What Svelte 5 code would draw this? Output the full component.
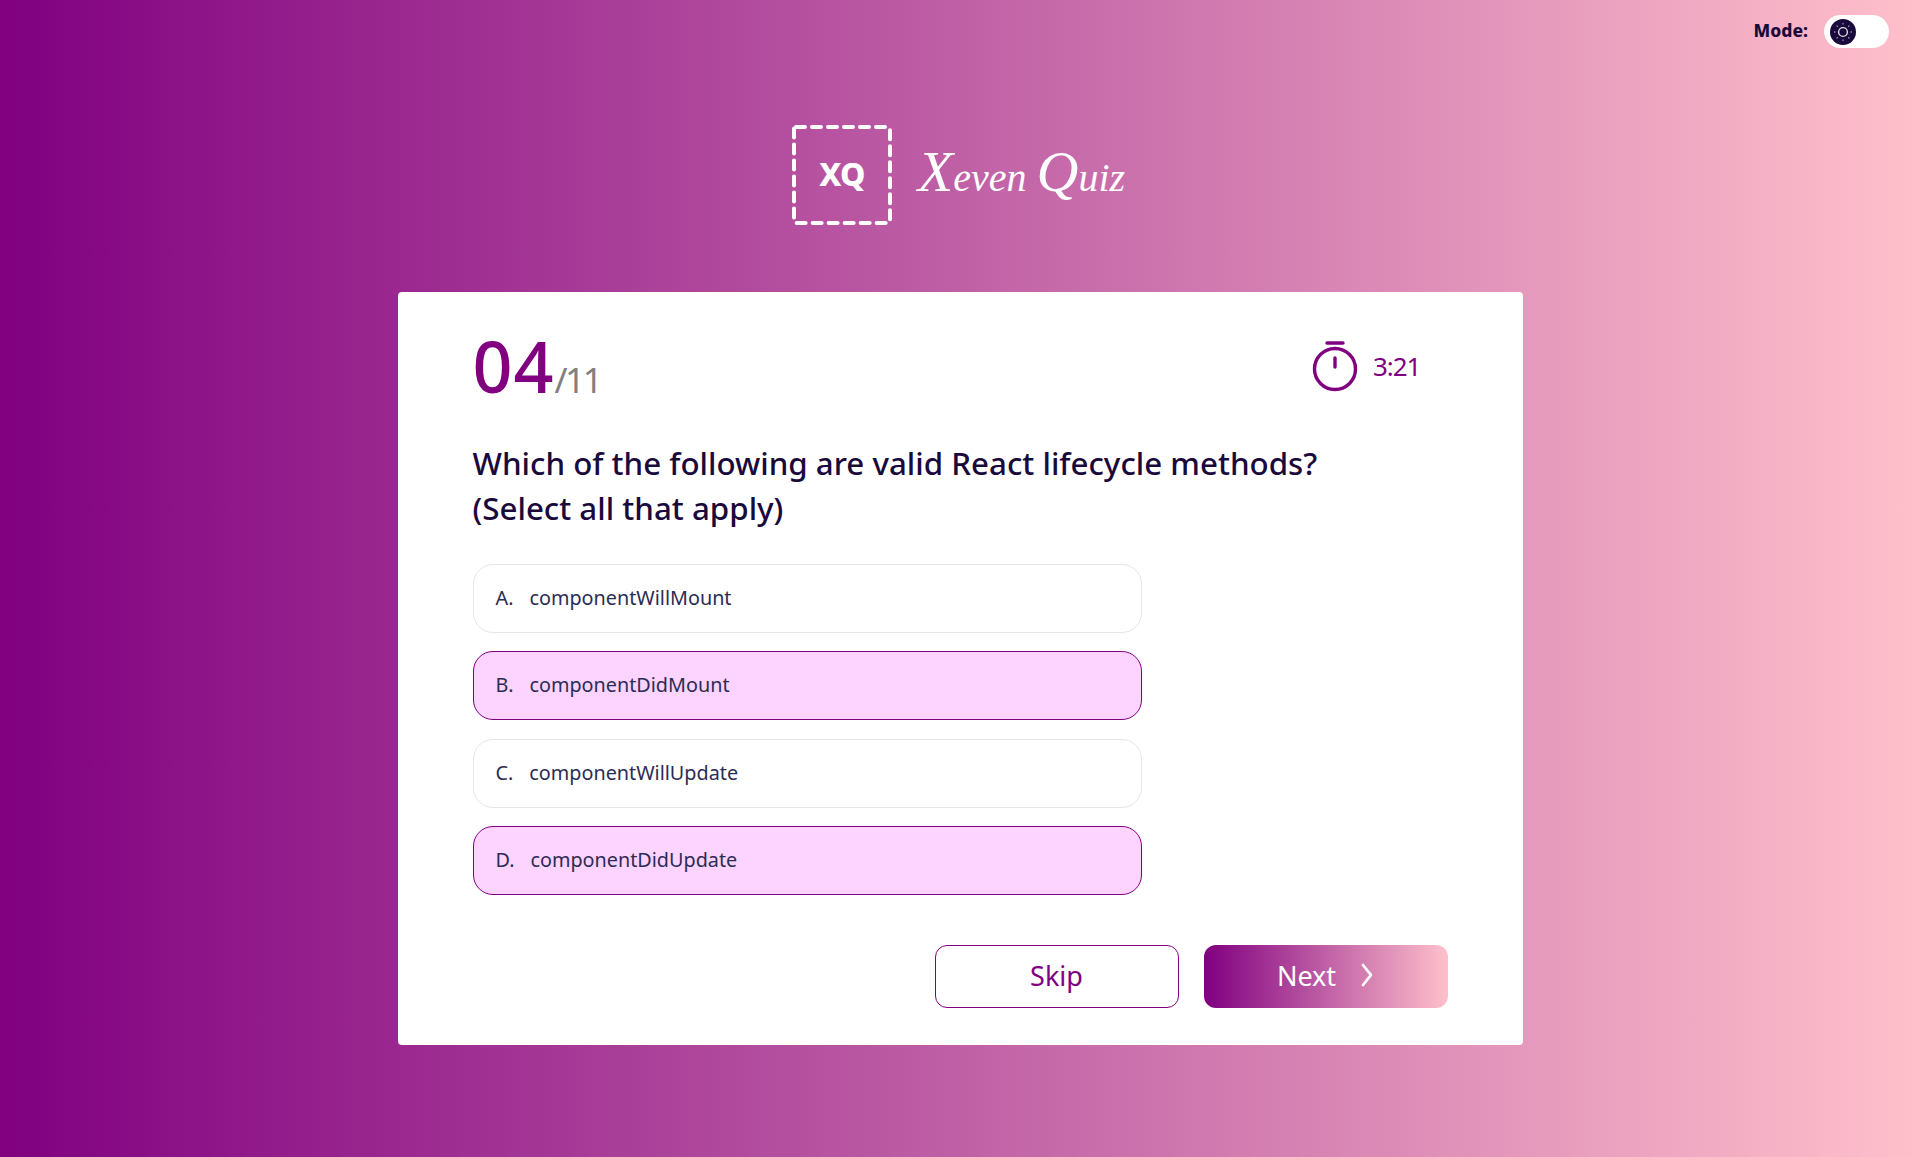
<script lang="ts">
  const options = [
    { key: 'A', text: 'componentWillMount', picked: false },
    { key: 'B', text: 'componentDidMount', picked: true },
    { key: 'C', text: 'componentWillUpdate', picked: false },
    { key: 'D', text: 'componentDidUpdate', picked: true }
  ];
</script>

<main class="page">
  <div class="mode">
    <span class="mode-label">Mode:</span>
    <div class="toggle">
      <span class="knob">
        <svg width="24" height="24" viewBox="0 0 24 24" fill="none" stroke="#fff">
          <circle cx="12" cy="12" r="4.4" stroke-width="1.4" opacity="0.85" />
          <g stroke-width="1.3" stroke-linecap="round" opacity="0.55">
            <path d="M12 3.5v.5M12 20v.5M3.5 12h.5M20 12h.5M6 6l.4.4M17.6 17.6l.4.4M6 18l.4-.4M17.6 6.4l.4-.4" />
          </g>
        </svg>
      </span>
    </div>
  </div>

  <header class="brand">
    <div class="logo">
      <svg class="frame" width="100" height="100" viewBox="0 0 100 100" fill="none" stroke="#fff" stroke-width="4" stroke-linecap="round" stroke-linejoin="round">
        <rect x="2" y="2" width="96" height="96" rx="2" stroke-dasharray="9 7" />
      </svg>
      XQ
    </div>
    <span class="name"><span class="cap">X</span>even <span class="cap">Q</span>uiz</span>
  </header>

  <section class="card">
    <div class="card-head">
      <div class="count"><strong>04</strong><span>/11</span></div>
      <div class="timer">
        <svg width="46" height="52" viewBox="0 0 46 52" fill="none" stroke="#800080" stroke-width="3.4" stroke-linecap="round">
          <path d="M15 3h16" />
          <circle cx="23" cy="29" r="20.5" />
          <path d="M23 18v9" />
        </svg>
        <span>3:21</span>
      </div>
    </div>

    <h1>Which of the following are valid React lifecycle methods?<br />(Select all that apply)</h1>

    <ul class="options">
      {#each options as opt}
        <li class:picked={opt.picked}>
          <span class="key">{opt.key}.</span>
          <span>{opt.text}</span>
        </li>
      {/each}
    </ul>

    <div class="actions">
      <button class="skip" type="button">Skip</button>
      <button class="next" type="button">
        Next
        <svg width="14" height="24" viewBox="0 0 14 24" fill="none" stroke="#fff" stroke-width="2.8" stroke-linecap="round" stroke-linejoin="round">
          <path d="M3 2l8 10-8 10" />
        </svg>
      </button>
    </div>
  </section>
</main>

<style>
  :global(body) {
    margin: 0;
  }

  .page {
    position: relative;
    box-sizing: border-box;
    height: 1157px;
    padding-top: 125px;
    overflow: hidden;
    background: linear-gradient(90deg, #800080, #ffc0cb);
    font-family: "Noto Sans", sans-serif;
    color: #1a0a3c;
  }

  .mode {
    position: absolute;
    top: 15px;
    right: 31px;
    display: flex;
    align-items: center;
    gap: 16px;
    font-size: 17.5px;
    font-weight: 800;
  }

  .mode-label {
    padding-bottom: 3px;
  }

  .toggle {
    display: flex;
    align-items: center;
    width: 65px;
    height: 33px;
    padding-left: 6px;
    box-sizing: border-box;
    border-radius: 17px;
    background: #fff;
  }

  .knob {
    display: flex;
    align-items: center;
    justify-content: center;
    width: 26px;
    height: 26px;
    border-radius: 50%;
    background: #1a0a3c;
  }

  .brand {
    display: flex;
    align-items: center;
    justify-content: center;
    gap: 26px;
    height: 100px;
    padding-right: 3px;
    color: #fff;
  }

  .logo {
    position: relative;
    display: flex;
    align-items: center;
    justify-content: center;
    width: 100px;
    height: 100px;
    padding-bottom: 3px;
    box-sizing: border-box;
    font-size: 32px;
    font-weight: 800;
    letter-spacing: -1px;
  }

  .frame {
    position: absolute;
    inset: 0;
  }

  .name {
    font-family: "Liberation Serif", serif;
    font-style: italic;
    font-size: 40px;
    line-height: 100px;
  }

  .cap {
    font-size: 58px;
  }

  .card {
    box-sizing: border-box;
    width: 1125px;
    height: 753px;
    margin: 67px auto 0;
    padding: 32px 75px 0;
    border-radius: 4px;
    background: #fff;
  }

  .card-head {
    display: flex;
    align-items: center;
    justify-content: space-between;
    padding-right: 27px;
  }

  .count {
    display: flex;
    align-items: baseline;
    color: #800080;
  }

  .count strong {
    font-size: 70px;
    font-weight: 500;
    letter-spacing: 1px;
    line-height: 84px;
  }

  .count span {
    color: #808080;
    font-size: 35px;
    letter-spacing: -2.5px;
  }

  .timer {
    display: flex;
    align-items: center;
    gap: 15px;
    color: #800080;
    font-size: 26px;
    letter-spacing: -1px;
  }

  h1 {
    margin: 33px 0 0;
    font-size: 31.3px;
    font-weight: 500;
    line-height: 45px;
  }

  .options {
    display: grid;
    gap: 18.3px;
    width: 669px;
    margin: 33px 0 0;
    padding: 0;
    list-style: none;
  }

  .options li {
    display: flex;
    align-items: center;
    gap: 16px;
    box-sizing: border-box;
    height: 69px;
    padding: 0 0 2px 22px;
    border: 1px solid #e6e6e6;
    border-radius: 20px;
    font-size: 19.8px;
    color: #2c2c54;
  }

  .options li.picked {
    border-color: #800080;
    background: #fdd3ff;
  }

  .actions {
    display: flex;
    justify-content: flex-end;
    gap: 25px;
    margin-top: 50px;
  }

  button {
    display: flex;
    align-items: center;
    justify-content: center;
    box-sizing: border-box;
    width: 244px;
    height: 63px;
    padding: 0 0 2px;
    border-radius: 12px;
    font: inherit;
    font-size: 27px;
  }

  .skip {
    border: 1px solid #800080;
    background: #fff;
    color: #800080;
  }

  .next {
    gap: 24px;
    border: 0;
    background: linear-gradient(90deg, #800080, #ffc0cb);
    color: #fff;
  }
</style>
